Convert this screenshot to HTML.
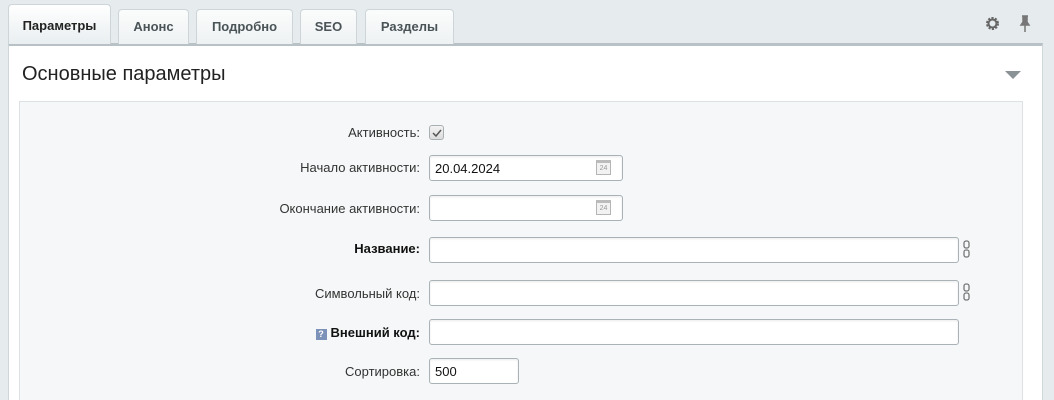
<!DOCTYPE html>
<html style="width:1054px;height:400px;overflow:hidden"><head><meta charset="utf-8"><style>
*{box-sizing:border-box;margin:0;padding:0}
body{width:1054px;height:400px;overflow:hidden;background:#e6ebed;font-family:"Liberation Sans",Arial,sans-serif;position:relative}
.tab{position:absolute;top:9px;height:35px;background:linear-gradient(#fbfcfc,#eef2f3);border:1px solid #cdd5d8;border-bottom:none;border-radius:4px 4px 0 0;font-size:13px;font-weight:bold;color:#4a5356;line-height:33px;text-align:center}
.tab.act{top:4px;height:40px;background:linear-gradient(#fff,#e9eef0);color:#222;line-height:42px}
.panel{position:absolute;left:8px;top:43px;width:1035px;height:357px;background:#fff;border:1px solid #cfd7da;border-top:3px solid #b8c2c6;border-bottom:none}
h1{position:absolute;left:22px;top:63px;font-size:20px;font-weight:normal;color:#222}
.inner{position:absolute;left:19px;top:101px;width:1004px;height:299px;background:#f5f7f8;border:1px solid #dce2e4;border-bottom:none}
.lbl{position:absolute;right:634px;font-size:13px;color:#333;text-align:right;white-space:nowrap}
.b{font-weight:bold;color:#111}
.inp{position:absolute;left:429px;height:26px;background:#fff;border:1px solid #a9b3b7;border-radius:3px;font-size:13px;color:#111;padding:5px 5px;box-shadow:inset 0 1px 2px rgba(0,0,0,.08)}
.cal{position:absolute;right:11px;top:4px;width:15px;height:15px;border:1px solid #b5b5b5;border-top:3px solid #bbb;background:#f2f2f2;font-size:7px;color:#999;text-align:center;line-height:11px}
.link{position:absolute;left:963px;width:7px;height:20px}
</style></head><body>
<div class="panel"></div>
<div class="tab act" style="left:8px;width:103px">Параметры</div>
<div class="tab" style="left:118px;width:71px">Анонс</div>
<div class="tab" style="left:196px;width:97px">Подробно</div>
<div class="tab" style="left:300px;width:57px">SEO</div>
<div class="tab" style="left:365px;width:89px">Разделы</div>
<svg style="position:absolute;left:985px;top:16px" width="15" height="15" viewBox="0 0 15 15"><circle cx="7.5" cy="7.5" r="5" fill="none" stroke="#666" stroke-width="3" stroke-dasharray="2 1.2"/><circle cx="7.5" cy="7.5" r="4" fill="none" stroke="#666" stroke-width="2"/></svg>
<svg style="position:absolute;left:1019px;top:15px" width="12" height="18" viewBox="0 0 12 18"><path d="M3 1h6M4 1v6L2 10h8L8 7V1M6 10v7" fill="#777" stroke="#777" stroke-width="1.5"/></svg>
<h1>Основные параметры</h1>
<svg style="position:absolute;left:1005px;top:71px" width="16" height="9"><path d="M0 0h16L8 8z" fill="#8a9295"/></svg>
<div class="inner"></div>
<div class="lbl" style="top:125px">Активность:</div>
<div style="position:absolute;left:429px;top:125px;width:15px;height:15px;border:1px solid #a9b0b3;border-radius:3px;background:linear-gradient(#f3f3f3,#dcdcdc)"><svg width="13" height="13"><path d="M3 7l3 3 5-6" fill="none" stroke="#555" stroke-width="1.5"/></svg></div>
<div class="lbl" style="top:160px">Начало активности:</div>
<div class="inp" style="top:155px;width:194px">20.04.2024<div class="cal">24</div></div>
<div class="lbl" style="top:201px">Окончание активности:</div>
<div class="inp" style="top:195px;width:194px"><div class="cal">24</div></div>
<div class="lbl b" style="top:241px">Название:</div>
<div class="inp" style="top:237px;width:530px"></div>
<svg class="link" style="top:240px" viewBox="0 0 7 20"><rect x="1" y="1" width="5" height="7" rx="2" fill="none" stroke="#777" stroke-width="1.3"/><rect x="1" y="10" width="5" height="7" rx="2" fill="none" stroke="#777" stroke-width="1.3"/></svg>
<div class="lbl" style="top:286px">Символьный код:</div>
<div class="inp" style="top:280px;width:530px"></div>
<svg class="link" style="top:283px" viewBox="0 0 7 20"><rect x="1" y="1" width="5" height="7" rx="2" fill="none" stroke="#777" stroke-width="1.3"/><rect x="1" y="10" width="5" height="7" rx="2" fill="none" stroke="#777" stroke-width="1.3"/></svg>
<div class="lbl b" style="top:325px"><span style="display:inline-block;width:11px;height:11px;background:#7d92b8;color:#fff;font-size:9px;line-height:11px;text-align:center;margin-right:4px;vertical-align:0">?</span>Внешний код:</div>
<div class="inp" style="top:319px;width:530px"></div>
<div class="lbl" style="top:364px">Сортировка:</div>
<div class="inp" style="top:358px;width:90px">500</div>
</body></html>
